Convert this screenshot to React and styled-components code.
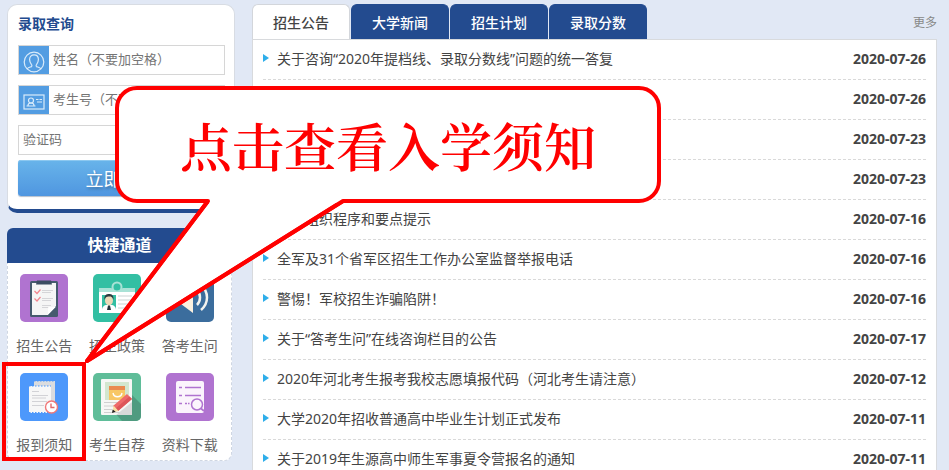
import styled, { createGlobalStyle } from "styled-components";

const notices = [
  { title: "关于咨询“2020年提档线、录取分数线”问题的统一答复", date: "2020-07-26" },
  { title: "", date: "2020-07-26" },
  { title: "", date: "2020-07-23" },
  { title: "", date: "2020-07-23" },
  { title: "面试组织程序和要点提示", date: "2020-07-16" },
  { title: "全军及31个省军区招生工作办公室监督举报电话", date: "2020-07-16" },
  { title: "警惕！军校招生诈骗陷阱！", date: "2020-07-16" },
  { title: "关于“答考生问”在线咨询栏目的公告", date: "2020-07-17" },
  { title: "2020年河北考生报考我校志愿填报代码（河北考生请注意）", date: "2020-07-12" },
  { title: "大学2020年招收普通高中毕业生计划正式发布", date: "2020-07-11" },
  { title: "关于2019年生源高中师生军事夏令营报名的通知", date: "2020-07-11" },
];

const tabs = ["招生公告", "大学新闻", "招生计划", "录取分数"];

const UserIcon = () => (
  <svg width="22" height="22" viewBox="0 0 22 22" fill="none" stroke="#d9ebfa" strokeWidth="1.2">
    <circle cx="11" cy="11" r="9.8" />
    <path d="M4 18c1-1.6 3-1.8 4.4-2.4.6-.3.6-1.4.1-2C7.3 12 6.6 10.400 6.600 8.400 6.600 5.600 8.400 3.800 11 3.800s4.400 1.800 4.400 4.600c0 2-.7 3.600-1.900 5.200-.5.6-.5 1.700.1 2C15 16.200 17 16.400 18 18" />
  </svg>
);

const IdCardIcon = () => (
  <svg width="22" height="18" viewBox="0 0 22 18" fill="none" stroke="#d9ebfa" strokeWidth="1.2">
    <rect x="1" y="2" width="20" height="14" />
    <circle cx="8" cy="7.5" r="2.5" />
    <path d="M3.500 13h9M5 12.500c0-1.500 1.200-2.500 3-2.500s3 1 3 2.500M13 6.500h2.500M16.500 6.500H19M14 9h5" />
  </svg>
);

const ChecklistIcon = () => (
  <svg width="48" height="48" viewBox="0 0 48 48">
    <rect width="48" height="48" rx="5" fill="#b073d0" />
    <rect x="10" y="7" width="28" height="36" rx="1.5" fill="#465a6e" />
    <path d="M12 9h24v23l-8 9H12z" fill="#f5f5f5" />
    <path d="M36 33l-8 8v-6.500l1.500-1.500z" fill="#fff" />
    <path d="M36 33v8h-8z" fill="#465a6e" />
    <path d="M17 6.500h14l1 4H16z" fill="#3b4d61" />
    <path d="M14.500 17l2.500 2.500 3.500-4M14.500 24.500l2.500 2.500 3.500-4" fill="none" stroke="#f2848d" strokeWidth="1.2" />
    <path d="M22 16.500h11M22 18.500h9M22 24.500h11M22 26.500h9M22 31.500h9M22 33.500h6" stroke="#d5d5d8" />
  </svg>
);

const BadgeIcon = () => (
  <svg width="48" height="48" viewBox="0 0 48 48">
    <rect width="48" height="48" rx="5" fill="#33bfa3" />
    <circle cx="24" cy="13" r="4.5" fill="none" stroke="#a9e2d6" strokeWidth="2" />
    <path d="M6 14h12c2 0 2 3 6 3s4-3 6-3h12v5H6z" fill="#a9e2d6" />
    <rect x="6" y="18" width="36" height="21" fill="#fff" />
    <rect x="9" y="21" width="14" height="15" fill="#33bfa3" />
    <path d="M9 36c0-3 2-5 5-5h4c3 0 5 2 5 5z" fill="#fff" />
    <ellipse cx="16" cy="26.5" rx="4" ry="5" fill="#ecd9b8" />
    <path d="M11.500 26c-.7-5 2-6 4.500-6s5 1 4.500 6c-1-3-2-3.500-4.500-3.500s-3.500.5-4.500 3.500z" fill="#2f3a3f" />
    <path d="M15 31.500h2l1 4.500h-4z" fill="#26343b" />
    <path d="M25 22h14M25 26h14M25 30h14M25 34h14" stroke="#cbd3d3" />
  </svg>
);

const SpeakerIcon = () => (
  <svg width="48" height="48" viewBox="0 0 48 48">
    <rect width="48" height="48" rx="5" fill="#3b6d9d" />
    <path d="M8 18h7l12-9v30l-12-9H8z" fill="#faf0df" />
    <path d="M31 16c4 4 4 11 0 15M35 11c8 7 8 18 0 25" fill="none" stroke="#f3f3ef" strokeWidth="2.5" />
  </svg>
);

const RegisterIcon = () => (
  <svg width="48" height="48" viewBox="0 0 48 48">
    <rect width="48" height="48" rx="5" fill="#4d98fb" />
    <path d="M14 8h21v27H14z" fill="#dadcdf" />
    <path d="M14 8h21" stroke="#4d98fb" strokeDasharray="1.5 1.5" />
    <path d="M9 13h22v27H9z" fill="#f7f7f7" />
    <path d="M9 13h22M9 39.500h22" stroke="#4d98fb" strokeDasharray="1.5 1.5" />
    <path d="M12 18.500h7M12 22.500h16M12 25h14M12 28.500h15M12 32.500h12" stroke="#d2d2d6" />
    <circle cx="31.5" cy="34" r="6" fill="#fff" stroke="#f07878" strokeWidth="1.4" />
    <path d="M31 30.500v4h3.500" fill="none" stroke="#e36b6b" strokeWidth="1.4" />
  </svg>
);

const PencilIcon = () => (
  <svg width="48" height="48" viewBox="0 0 48 48">
    <rect width="48" height="48" rx="5" fill="#5fbd99" />
    <path d="M39 22l9 9v12a5 5 0 0 1-5 5H29l-7-8z" fill="#4f9b80" />
    <rect x="8" y="6" width="31" height="36" rx="1" fill="#f7f7f5" />
    <rect x="12" y="9" width="24" height="18" fill="#d3e6cf" />
    <path d="M16 13h16v14H16z" fill="#f8c765" />
    <path d="M16 13h16v4H16z" fill="#ea8a50" />
    <path d="M20 20c1 5 8 5 9 0" fill="none" stroke="#fff" strokeWidth="1.4" />
    <path d="M11 29.500h15M11 33h10M11 36.500h8M11 39.500h17" stroke="#d0d0d0" />
    <path d="M39 29v13H23z" fill="#d9d9d9" />
    <path d="M34 21l5 5-14 12-5-5z" fill="#ee6a6b" />
    <path d="M36.500 23.500l2.500 2.500-14 12-2.500-2.500z" fill="#dd5559" />
    <path d="M20.500 32.500l5 5.500-6 1.500z" fill="#f8dda4" />
    <path d="M19.700 36.500l3 2.300-3.700 1.200z" fill="#222" />
  </svg>
);

const DownloadIcon = () => (
  <svg width="48" height="48" viewBox="0 0 48 48">
    <rect width="48" height="48" rx="5" fill="#b073d0" />
    <rect x="10" y="8" width="28" height="32" rx="2" fill="#fbf4fc" />
    <path d="M13 14.500h3M19 14.500h16M13 22.500h3M19 22.500h16M13 30.500h3M19 30.500h2M22 30.500h1.500" stroke="#b073d0" strokeWidth="1.3" />
    <circle cx="31" cy="31.5" r="5.5" fill="#fbf4fc" stroke="#b073d0" strokeWidth="1.5" />
    <path d="M35 35.500l3 2.500" stroke="#b073d0" strokeWidth="1.8" />
  </svg>
);

const quickLinks = [
  { label: "招生公告", Icon: ChecklistIcon },
  { label: "招生政策", Icon: BadgeIcon },
  { label: "答考生问", Icon: SpeakerIcon },
  { label: "报到须知", Icon: RegisterIcon, marked: true },
  { label: "考生自荐", Icon: PencilIcon },
  { label: "资料下载", Icon: DownloadIcon },
];

const QueryForm = () => (
  <QueryPanel onSubmit={(e) => e.preventDefault()}>
    <h2>录取查询</h2>
    <Field>
      <FieldIcon htmlFor="name" aria-label="姓名">
        <UserIcon />
      </FieldIcon>
      <input id="name" type="text" placeholder="姓名（不要加空格）" />
    </Field>
    <Field>
      <FieldIcon htmlFor="examNo" aria-label="考生号">
        <IdCardIcon />
      </FieldIcon>
      <input id="examNo" type="text" placeholder="考生号（不要加空格）" />
    </Field>
    <Field>
      <input type="text" aria-label="验证码" placeholder="验证码" />
    </Field>
    <SubmitBtn type="submit">立即查询</SubmitBtn>
  </QueryPanel>
);

const QuickPanel = () => (
  <QuickWrap>
    <h2>快捷通道</h2>
    <QuickGrid>
      {quickLinks.map(({ label, Icon, marked }) => (
        <QuickItem key={label} href="#" $marked={marked}>
          <Icon />
          <span>{label}</span>
        </QuickItem>
      ))}
    </QuickGrid>
  </QuickWrap>
);

const NoticeBoard = () => (
  <Board>
    <BoardHeader>
      {tabs.map((tab, index) => (
        <Tab key={tab} type="button" $active={index === 0}>
          {tab}
        </Tab>
      ))}
      <MoreLink href="#">更多</MoreLink>
    </BoardHeader>
    <NoticeList>
      {notices.map(({ title, date }, index) => (
        <NoticeItem key={index}>
          <a href="#">{title}</a>
          <time>{date}</time>
        </NoticeItem>
      ))}
    </NoticeList>
  </Board>
);

const App = () => (
  <>
    <GlobalStyle />
    <Page>
      <Sidebar>
        <QueryForm />
        <QuickPanel />
      </Sidebar>
      <NoticeBoard />
      <Callout>
        <CalloutTail width="264" height="170" viewBox="0 0 264 170">
          <path d="M126 5L5 165 261 5" fill="#fff" stroke="#f00" strokeWidth="4" strokeLinejoin="round" />
          <path d="M125 0h137v3L257 7H124z" fill="#fff" />
          <path d="M120 5h6L5 165 261 5h4" fill="none" stroke="#f00" strokeWidth="4" strokeLinejoin="round" />
        </CalloutTail>
        <p>点击查看入学须知</p>
      </Callout>
    </Page>
  </>
);

const GlobalStyle = createGlobalStyle`
  * {
    box-sizing: border-box;
    margin: 0;
    padding: 0;
  }

  body {
    height: 100vh;
    overflow: hidden;
    background: #e1e8f5;
    color: #444;
    font-family: "Noto Sans", "Noto Sans CJK SC", sans-serif;
    font-size: 14px;
  }

  a {
    color: inherit;
    text-decoration: none;
  }

  button, input {
    font-family: inherit;
  }
`;

const Page = styled.div`
  position: relative;
  display: flex;
  align-items: flex-start;
  gap: 17px;
  padding: 4px 12px 0 7px;
`;

const Sidebar = styled.aside`
  flex: 0 0 228px;
  min-width: 0;
`;

const QueryPanel = styled.form`
  display: flex;
  flex-direction: column;
  gap: 10px;
  padding: 8px 9px 13px 10px;
  background: #fff;
  border: 1px solid #d8dce3;
  border-bottom: 4px solid #234b8f;
  border-radius: 10px;

  h2 {
    color: #234b8f;
    font-size: 14px;
    line-height: 22px;
  }
`;

const Field = styled.div`
  display: flex;
  height: 30px;
  border: 1px solid #d6d6d6;
  background: #fff;

  input {
    flex: 1;
    width: 100%;
    min-width: 0;
    padding: 0 4px 2px;
    border: 0;
    outline: 0;
    background: transparent;
    font-size: 13px;
  }

  input::placeholder {
    color: #757575;
  }
`;

const FieldIcon = styled.label`
  display: flex;
  flex: 0 0 30px;
  align-items: center;
  justify-content: center;
  padding-top: 4px;
  background: #539de2;
`;

const SubmitBtn = styled.button`
  height: 36px;
  margin-top: -5px;
  border: 0;
  border-radius: 3px;
  background: linear-gradient(#68b4ea, #4f96e0);
  box-shadow: inset 0 1px 0 #8cc8f0, 0 1px 1px #b5bfcc;
  color: #fff;
  font-size: 18px;
  text-shadow: 1px 2px 3px rgba(0, 0, 0, 0.3);
`;

const QuickWrap = styled.section`
  width: 225px;
  margin-top: 15px;

  h2 {
    border-radius: 6px 6px 0 0;
    background: #234b8f;
    color: #fff;
    font-size: 16px;
    line-height: 35px;
    text-align: center;
  }
`;

const QuickGrid = styled.div`
  display: grid;
  grid-template-columns: repeat(3, 1fr);
  row-gap: 15px;
  padding: 11px 5px 3px 0;
  border: 1px dashed #cfd6e2;
  border-top: 0;
  border-radius: 0 0 8px 8px;
  background: #fff;
`;

const QuickItem = styled.a`
  position: relative;
  display: flex;
  flex-direction: column;
  align-items: center;
  gap: 12px;
  color: #666;
  line-height: 24px;

  &::after {
    content: "";
    display: ${({ $marked }) => ($marked ? "block" : "none")};
    position: absolute;
    inset: -11px -5px -4px -6px;
    border: 4px solid #f00;
  }
`;

const Board = styled.main`
  flex: 1;
  min-width: 0;
`;

const BoardHeader = styled.div`
  display: flex;
  align-items: stretch;
  gap: 1px;
  height: 35px;
`;

const Tab = styled.button`
  width: 98px;
  border: 1px solid ${({ $active }) => ($active ? "#d3d6db" : "#234b8f")};
  border-bottom: 0;
  border-radius: 6px 6px 0 0;
  background: ${({ $active }) => ($active ? "#fff" : "#234b8f")};
  color: ${({ $active }) => ($active ? "#444" : "#fff")};
  font-size: 14px;
  font-weight: 500;
`;

const MoreLink = styled.a`
  margin-left: auto;
  color: #888;
  font-size: 12px;
  line-height: 38px;
`;

const NoticeList = styled.ul`
  padding: 0 10px;
  border: 1px solid #d8dadd;
  background: #fff;
  list-style: none;
`;

const NoticeItem = styled.li`
  display: flex;
  align-items: center;
  height: 40px;
  padding-bottom: 3px;
  border-bottom: 1px dashed #d9d9d9;

  &::before {
    content: "";
    margin-right: 8px;
    border: solid transparent;
    border-width: 4px 0 4px 6px;
    border-left-color: #2eaeea;
  }

  a {
    flex: 1;
    white-space: nowrap;
  }

  time {
    font-weight: bold;
  }
`;

/* Red speech bubble laid over both columns, pointing at the marked shortcut */
const Callout = styled.div`
  position: absolute;
  top: 86px;
  left: 115px;
  display: flex;
  align-items: center;
  justify-content: center;
  width: 546px;
  height: 117px;
  border: 4px solid #f00;
  border-radius: 22px;
  background: #fff;

  p {
    color: #f00;
    font-family: "Noto Serif CJK SC", "Liberation Serif", "Noto Sans CJK SC", serif;
    font-size: 52px;
    font-weight: 600;
    line-height: 72px;
    white-space: nowrap;
  }
`;

const CalloutTail = styled.svg`
  position: absolute;
  top: 106px;
  left: -37px;
`;

export default App;
